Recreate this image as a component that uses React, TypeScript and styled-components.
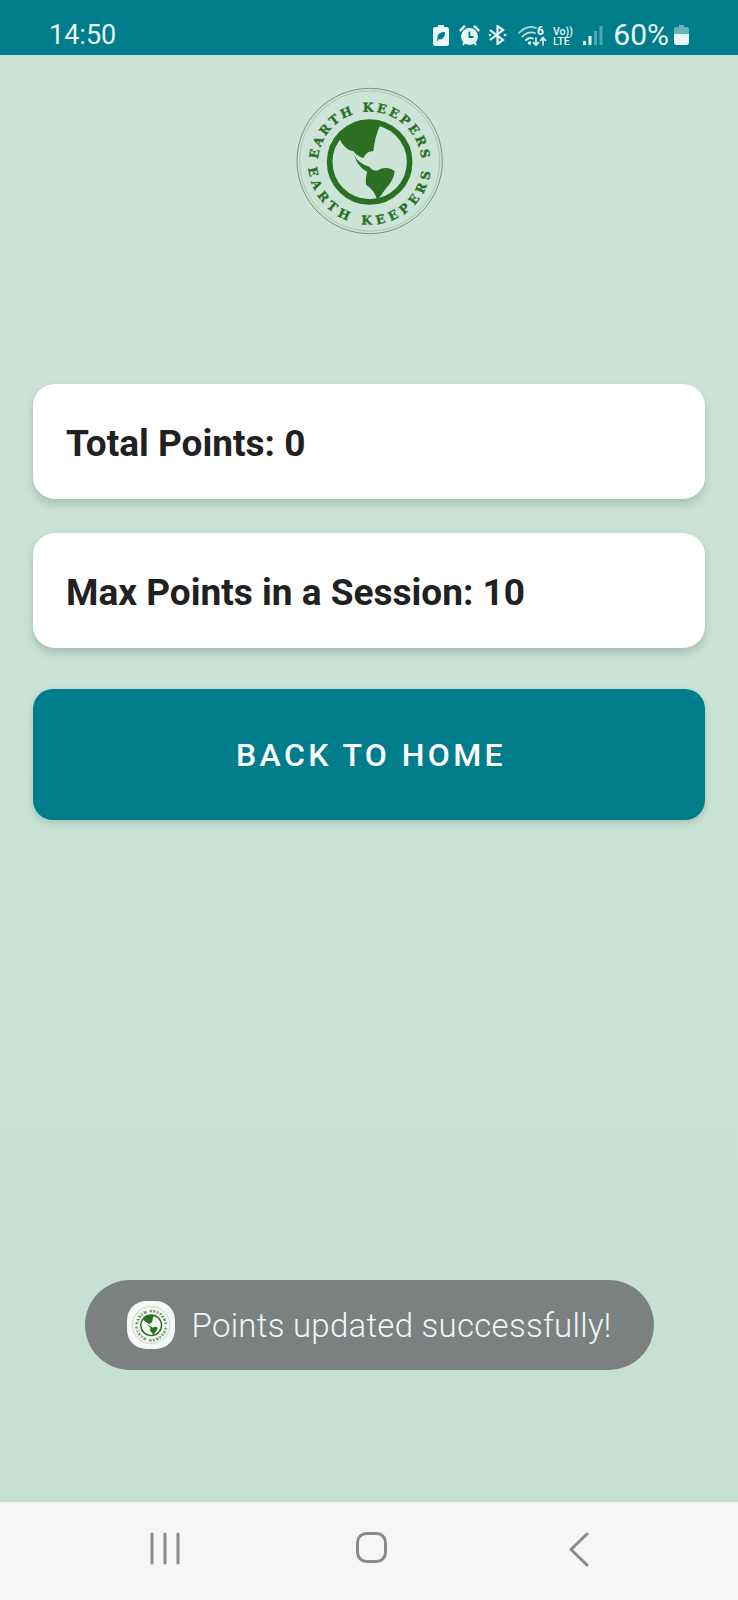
import React from "react";
import styled, { createGlobalStyle } from "styled-components";

const GlobalStyle = createGlobalStyle`
  html, body {
    margin: 0;
    padding: 0;
    background: #c5e0d3;
  }
  * {
    box-sizing: border-box;
  }
`;

const Screen = styled.div`
  width: 738px;
  height: 1600px;
  display: flex;
  flex-direction: column;
  font-family: Roboto, "Liberation Sans", sans-serif;
  background: linear-gradient(180deg, #cde4d9 0%, #c5e0d3 100%);
`;

const StatusBar = styled.header`
  height: 55px;
  flex: none;
  background: #007d8a;
  color: #e6f6f5;
  display: flex;
  align-items: center;
  padding: 15px 0 0 49px;
`;

const Clock = styled.span`
  font-size: 27px;
  line-height: 27px;
  margin-top: 1px;
`;

const StatusIcons = styled.div`
  margin-left: auto;
  display: flex;
  align-items: center;
  padding-right: 49px;
`;

const StatusIcon = styled.svg<{ $gap: number }>`
  display: block;
  margin-left: ${(p) => p.$gap}px;
  color: #e9f7f6;
`;

const Percent = styled.span`
  font-size: 30px;
  line-height: 30px;
  margin-left: 10px;
`;

const Content = styled.main`
  flex: 1;
  display: flex;
  flex-direction: column;
  padding: 21px 33px 0;
`;

const LogoRow = styled.div`
  display: flex;
  justify-content: center;
  margin-bottom: 138px;
`;

const StatCard = styled.section`
  height: 115px;
  margin-bottom: 34px;
  padding: 4px 0 0 33px;
  display: flex;
  align-items: center;
  background: #fff;
  border-radius: 22px;
  box-shadow: 0 5px 9px rgba(40, 70, 60, 0.22);
  color: #212121;
  font-size: 37px;
  font-weight: 700;
`;

const HomeButton = styled.button`
  height: 131px;
  margin-top: 7px;
  padding: 0 0 0 4px;
  border: 0;
  border-radius: 20px;
  background: #007d8a;
  box-shadow: 0 3px 7px rgba(40, 70, 60, 0.2);
  color: #fff;
  font-family: inherit;
  font-size: 32px;
  font-weight: 500;
  letter-spacing: 3.4px;
`;

const Toast = styled.div`
  align-self: center;
  margin-top: auto;
  margin-bottom: 132px;
  width: 569px;
  height: 90px;
  padding-left: 42px;
  display: flex;
  align-items: center;
  gap: 17px;
  border-radius: 45px;
  background: #7a8180;
  color: #f2f5f4;
  font-size: 33px;
  font-weight: 300;
  letter-spacing: 0.27px;
`;

const ToastBadge = styled.div`
  width: 48px;
  height: 48px;
  flex: none;
  display: flex;
  align-items: center;
  justify-content: center;
  background: #f6f8f6;
  border-radius: 40%;
`;

const NavBar = styled.nav`
  height: 98px;
  flex: none;
  background: #f6f6f9;
  display: grid;
  grid-template-columns: 206px 213px auto;
  align-items: start;
  padding: 30px 0 0 150px;
  color: #8a8a8c;
`;

const LOGO_GREEN = "#2a6f22";

const Logo = ({ size, id }: { size: number; id: string }) => (
  <svg width={size} height={size} viewBox="0 0 510 510">
    <defs>
      <path id={`${id}Top`} d="M 102 262 A 155 155 0 0 1 412 262" />
      <path id={`${id}Bottom`} d="M 73 262 A 184 184 0 0 0 441 262" />
    </defs>
    <circle cx="257" cy="255" r="218" fill="none" stroke="#5d8a5c" strokeWidth="2.5" />
    <circle cx="257" cy="255" r="210" fill="none" stroke="#86ab84" strokeWidth="1.5" />
    <circle cx="257" cy="258" r="120" fill="none" stroke={LOGO_GREEN} strokeWidth="17" />
    <path
      fill={LOGO_GREEN}
      d="M166 186 Q208 128 288 148 Q272 185 268 226 Q250 222 238 246 Q220 242 208 226 Q180 222 166 186 Z"
    />
    <path
      fill={LOGO_GREEN}
      d="M210 236 Q222 262 256 272 Q272 292 290 278 Q315 272 332 286 Q330 312 304 340 Q292 358 280 372 Q270 340 246 326 Q244 300 250 288 Q222 274 210 236 Z"
    />
    <text
      fill={LOGO_GREEN}
      stroke={LOGO_GREEN}
      strokeWidth="1"
      fontFamily="'DejaVu Serif', serif"
      fontWeight="700"
      fontSize="37"
      letterSpacing="8"
    >
      <textPath href={`#${id}Top`} startOffset="12">EARTH KEEPERS</textPath>
    </text>
    <text
      fill={LOGO_GREEN}
      stroke={LOGO_GREEN}
      strokeWidth="1"
      fontFamily="'DejaVu Serif', serif"
      fontWeight="700"
      fontSize="37"
      letterSpacing="14.5"
    >
      <textPath href={`#${id}Bottom`} startOffset="14">EARTH KEEPERS</textPath>
    </text>
  </svg>
);

const LeafBattery = () => (
  <StatusIcon $gap={0} width="16" height="21" viewBox="0 0 16 21">
    <path
      fill="currentColor"
      fillRule="evenodd"
      d="M5 0h6v2h2.500A2.500 2.500 0 0 1 16 4.500v14a2.500 2.500 0 0 1-2.500 2.500h-11A2.500 2.500 0 0 1 0 18.500v-14A2.500 2.500 0 0 1 2.500 2H5zM12 7C7.500 7 4 9 4.500 13.500l-1 2 1 .5 1-1.700C9.500 15 12 12.500 12 7z"
    />
  </StatusIcon>
);

const Alarm = () => (
  <StatusIcon $gap={10} width="21" height="21" viewBox="0 0 21 21">
    <path fill="currentColor" d="M0 5 5 0l2 1.500L1.500 7zM21 5l-5-5-2 1.500L19.500 7z" />
    <circle cx="10.500" cy="11.500" r="8.500" fill="currentColor" />
    <path d="M10.500 6.500v5.500h4" fill="none" stroke="#007d8a" strokeWidth="1.800" />
    <path d="M4 20l2-3M17 20l-2-3" stroke="currentColor" strokeWidth="2" />
  </StatusIcon>
);

const Bluetooth = () => (
  <StatusIcon $gap={8} width="19" height="20" viewBox="0 0 19 20">
    <path
      d="M2 5l13 10-5.500 4V1L15 5 2 15"
      fill="none"
      stroke="currentColor"
      strokeWidth="2.200"
    />
    <circle cx="2" cy="10" r="1.300" fill="currentColor" />
    <circle cx="17" cy="10" r="1.300" fill="currentColor" />
  </StatusIcon>
);

const WifiSix = () => (
  <StatusIcon $gap={11} width="29" height="21" viewBox="0 0 29 21">
    <g fill="none" stroke="currentColor" strokeLinecap="round">
      <path d="M1 8Q9-0.500 18 3" strokeWidth="1.800" opacity="0.7" />
      <path d="M4.500 11.500Q10 6 17 8" strokeWidth="1.800" opacity="0.8" />
      <path d="M8 15q3-3 7-1.500" strokeWidth="1.800" />
      <path d="M18 13v7M15.500 17.500l2.500 3 2.500-3M25 20v-7M22.500 15.500l2.500-3 2.500 3" strokeWidth="1.600" />
    </g>
    <circle cx="11.500" cy="18" r="1.700" fill="currentColor" />
    <text x="19" y="9.500" fontSize="12" fontWeight="700" fill="currentColor" fontFamily="Roboto, sans-serif">6</text>
  </StatusIcon>
);

const VoLte = () => (
  <StatusIcon $gap={6} width="22" height="27" viewBox="0 -3 22 27">
    <text x="0" y="9.500" fontSize="10.500" fontWeight="500" fill="currentColor" fontFamily="Roboto, sans-serif">Vo))</text>
    <text x="0" y="20" fontSize="10.500" fontWeight="500" fill="currentColor" fontFamily="Roboto, sans-serif">LTE</text>
  </StatusIcon>
);

const Signal = () => (
  <StatusIcon $gap={8} width="20" height="19" viewBox="0 0 20 19">
    <rect x="0" y="15" width="3" height="4" fill="currentColor" />
    <rect x="5.500" y="10" width="3" height="9" fill="currentColor" />
    <rect x="11" y="5" width="3" height="14" fill="currentColor" opacity="0.35" />
    <rect x="16.500" y="0" width="3" height="19" fill="currentColor" opacity="0.35" />
  </StatusIcon>
);

const Battery = () => (
  <StatusIcon $gap={5} width="15" height="20" viewBox="0 0 15 20">
    <path fill="currentColor" opacity="0.45" d="M5 0h5v2h2.500A2.500 2.500 0 0 1 15 4.500V9H0V4.500A2.500 2.500 0 0 1 2.500 2H5z" />
    <path fill="currentColor" d="M0 9h15v8.500a2.500 2.500 0 0 1-2.500 2.500h-10A2.500 2.500 0 0 1 0 17.500z" />
  </StatusIcon>
);

const RecentsIcon = () => (
  <svg width="30" height="33" viewBox="0 0 30 33">
    <path d="M2 2v29M15 2v29M28 2v29" stroke="currentColor" strokeWidth="3" strokeLinecap="round" />
  </svg>
);

const HomeIcon = () => (
  <svg width="31" height="31" viewBox="0 0 31 31">
    <rect x="1.500" y="1.500" width="28" height="28" rx="9" fill="none" stroke="currentColor" strokeWidth="3" />
  </svg>
);

const BackIcon = () => (
  <svg width="20" height="35" viewBox="0 0 20 35">
    <path d="M18 2 2 17.500 18 33" fill="none" stroke="currentColor" strokeWidth="3" strokeLinecap="round" strokeLinejoin="round" />
  </svg>
);

export default function App() {
  return (
    <Screen>
      <GlobalStyle />
      <StatusBar>
        <Clock>14:50</Clock>
        <StatusIcons>
          <LeafBattery />
          <Alarm />
          <Bluetooth />
          <WifiSix />
          <VoLte />
          <Signal />
          <Percent>60%</Percent>
          <Battery />
        </StatusIcons>
      </StatusBar>
      <Content>
        <LogoRow>
          <Logo size={170} id="mainLogo" />
        </LogoRow>
        <StatCard>Total Points: 0</StatCard>
        <StatCard>Max Points in a Session: 10</StatCard>
        <HomeButton>BACK TO HOME</HomeButton>
        <Toast>
          <ToastBadge>
            <Logo size={44} id="toastLogo" />
          </ToastBadge>
          Points updated successfully!
        </Toast>
      </Content>
      <NavBar>
        <RecentsIcon />
        <HomeIcon />
        <BackIcon />
      </NavBar>
    </Screen>
  );
}
